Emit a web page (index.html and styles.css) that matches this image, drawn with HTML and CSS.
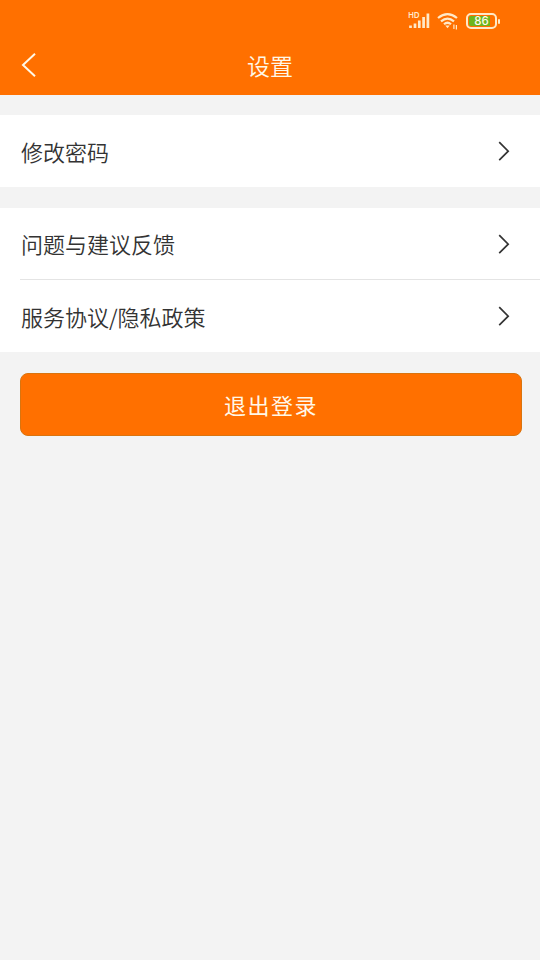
FILE: index.html
```html
<!DOCTYPE html>
<html lang="zh-CN">
<head>
<meta charset="utf-8">
<title>设置</title>
<link rel="stylesheet" href="styles.css">
</head>
<body>
<header class="header">
  <div class="status">
    <svg class="signal" width="24" height="20" viewBox="0 0 24 20">
      <text class="hd" x="0" y="8" textLength="11.5">HD</text>
      <path d="M2.500 15.500v2.500M7 13.500v4.500M11.300 10.500v7.500M15.600 7v11M19.900 3.500v14.500" stroke="#ffe9c8" stroke-width="2.700" fill="none"/>
    </svg>
    <svg class="wifi" width="22" height="20" viewBox="0 0 22 20">
      <g fill="none" stroke="#ffe9c8" stroke-width="2.2">
        <path d="M1 8Q10.500 0.200 20 8"/>
        <path d="M4 11.400Q10.500 5.700 17 11.400"/>
        <path d="M7 14.300Q10.500 11.200 14 14.300"/>
      </g>
      <path d="M8.300 15.500h4.400l-2.200 2.700z" fill="#ffe9c8"/>
      <path d="M16.900 14.500v4.500M19.400 15v4.500" stroke="#ffe9c8" stroke-width="1.200"/>
    </svg>
    <span class="battery"><span class="battery-level">86</span></span>
  </div>
  <div class="titlebar">
    <svg class="back" width="16" height="26" viewBox="0 0 16 26"><path d="M14 1.800L2 13l12 11.200" fill="none" stroke="#fff8e8" stroke-width="2"/></svg>
    <h1 class="title">设置</h1>
  </div>
</header>
<main class="content">
  <section class="group">
    <a class="row"><span>修改密码</span><svg class="chevron" width="12" height="20" viewBox="0 0 12 20"><path d="M1.200 1.200L10.200 10.200L1.200 19.200" fill="none" stroke="#333" stroke-width="1.700"/></svg></a>
  </section>
  <section class="group">
    <a class="row row-short"><span>问题与建议反馈</span><svg class="chevron" width="12" height="20" viewBox="0 0 12 20"><path d="M1.200 1.200L10.200 10.200L1.200 19.200" fill="none" stroke="#333" stroke-width="1.700"/></svg></a>
    <hr class="divider">
    <a class="row"><span>服务协议/隐私政策</span><svg class="chevron" width="12" height="20" viewBox="0 0 12 20"><path d="M1.200 1.200L10.200 10.200L1.200 19.200" fill="none" stroke="#333" stroke-width="1.700"/></svg></a>
  </section>
  <button class="logout">退出登录</button>
</main>
</body>
</html>
```
FILE: styles.css
```css
* { box-sizing: border-box; }
body {
  margin: 0;
  min-height: 960px;
  background: #f3f3f3;
  color: #333;
  font-family: "Noto Sans CJK SC DemiLight", "Noto Sans CJK SC", sans-serif;
  font-size: 22px;
  font-weight: 300;
}
.header {
  height: 95px;
  background: #ff7000;
}
.status {
  display: flex;
  height: 36px;
  padding: 10px 40px 0 0;
  justify-content: flex-end;
}
.hd {
  font: 600 8px "Noto Sans", sans-serif;
  fill: #ffe9c8;
}
.wifi { margin: 0 7px 0 5px; }
.battery {
  position: relative;
  width: 31px;
  height: 16px;
  margin: 3px 3px 0 0;
  padding: 1px;
  border: 2px solid #ffe9c8;
  border-radius: 5px;
}
.battery::after {
  content: "";
  position: absolute;
  top: 4px;
  right: -5px;
  width: 2px;
  height: 5px;
  border-radius: 1px;
  background: #ffe9c8;
}
.battery-level {
  display: block;
  width: 25px;
  height: 10px;
  border-radius: 2px;
  background: linear-gradient(90deg, #6db51d 85%, transparent 85%);
  color: #fffbea;
  font: 500 11.5px/11px Inter, sans-serif;
  text-align: center;
}
.titlebar {
  display: grid;
  grid-template-columns: 60px 1fr 60px;
  height: 57px;
  align-items: center;
}
.back { margin-left: 21px; }
.title {
  margin: 0;
  padding-top: 2px;
  color: #fff8e8;
  font-size: 23px;
  font-weight: 400;
  line-height: 55px;
  text-align: center;
}
.content {
  display: flex;
  flex-direction: column;
  gap: 21px;
  padding-top: 20px;
}
.group { background: #fff; }
.row {
  display: flex;
  height: 72px;
  padding: 0 30px 0 21px;
  align-items: center;
  justify-content: space-between;
  line-height: 72px;
}
.row-short { height: 71px; }
.row-short span { padding-bottom: 1px; line-height: 70px; }
.divider {
  height: 1px;
  margin: 0 0 0 20px;
  border: 0;
  background: #e4e4e4;
}
.logout {
  height: 63px;
  margin: 0 18px 0 20px;
  padding: 0;
  border: 1px solid #d9740f;
  border-radius: 8px;
  background: #ff7000;
  color: #fff8e8;
  font: 400 22px/61px "Noto Sans CJK SC", sans-serif;
  letter-spacing: 1.500px;
}
```
